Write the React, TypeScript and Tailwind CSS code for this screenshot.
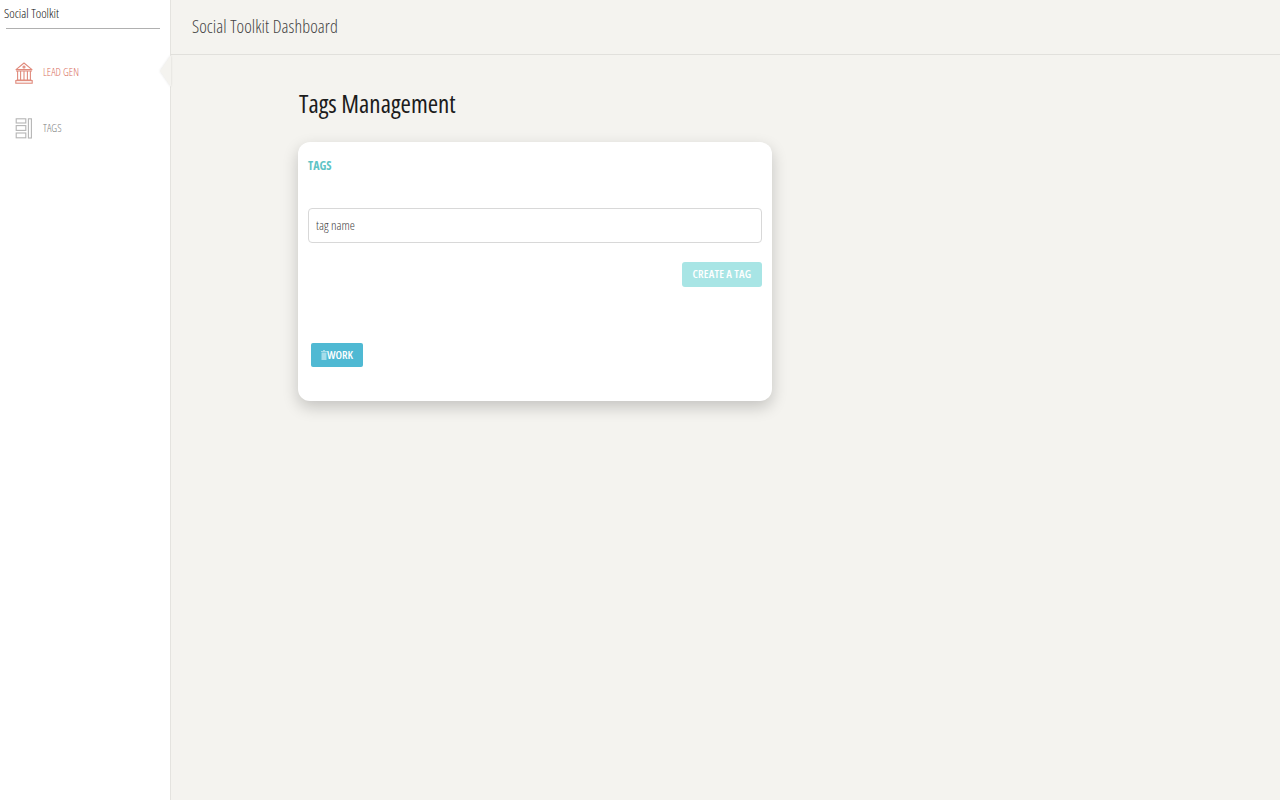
import React from 'react';

const font = { fontFamily: '"Open Sans", sans-serif' };

const BankIcon = () => (
  <svg width="18" height="22" viewBox="0 0 18 22" fill="none" stroke="#e08a7c" strokeWidth="1.1">
    <path d="M1 7.6 9 1l8 6.6z" strokeLinejoin="round" />
    <circle cx="9" cy="5" r="1" />
    <path d="M1 9h16M2.6 9v9M5.6 9v9M9 9v9M12.4 9v9M15.4 9v9M1.5 18h15" />
    <rect x="0.8" y="18.6" width="16.4" height="2.6" />
  </svg>
);

const TagsIcon = () => (
  <svg width="17" height="21" viewBox="0 0 17 21" fill="none" stroke="#b5b5b5" strokeWidth="1.1">
    <rect x="1.2" y="0.8" width="9.6" height="4.2" />
    <rect x="1.2" y="7.6" width="9.6" height="4.8" />
    <rect x="1.2" y="15" width="9.6" height="4.8" />
    <rect x="13.4" y="0.8" width="3" height="19.2" />
  </svg>
);

const TrashGlyph = () => (
  <svg width="6" height="10" viewBox="0 0 6 10" className="shrink-0" fill="#a5dce9">
    <path d="M2 0h2v1h2v1H0V1h2zM.5 2.6h5V10h-5z" />
  </svg>
);

export default function App() {
  return (
    <div className="flex min-h-[800px] bg-[#f4f3ef] font-stretch-[75%]" style={font}>
      <aside className="relative w-[171px] shrink-0 border-r border-[#e4e3df] bg-white">
        <div className="mr-[10px] ml-[6px] h-[29px] border-b border-[#b0b0b0] pt-[5px] text-[13px] leading-[17px] font-light text-[#111] -indent-[2px]">
          Social Toolkit
        </div>
        <nav className="mt-[33px] flex flex-col gap-[35px] pl-[15px]">
          <a className="flex h-[21px] items-center gap-[10px] text-[11px] font-light text-[#d96f5e]">
            <BankIcon />
            LEAD GEN
          </a>
          <a className="flex h-[21px] items-center gap-[11px] text-[11px] font-light text-[#808080]">
            <TagsIcon />
            TAGS
          </a>
        </nav>
        <span className="absolute top-[55px] right-[-1px] h-0 w-0 border-y-[16px] border-r-[11px] border-y-transparent border-r-[#f4f3ef] drop-shadow-[0_0_1px_rgba(0,0,0,0.12)]" />
      </aside>
      <div className="flex-1">
        <header className="flex h-[55px] items-center border-b border-[#e1e0dc] pb-[1px] pl-[21px] text-[18px] font-light tracking-[0.08px] text-[#444]">
          Social Toolkit Dashboard
        </header>
        <main className="pl-[128px] pt-[30px]">
          <h1 className="text-[25px] leading-[36px] font-normal text-[#1c1c1c]">Tags Management</h1>
          <section className="-ml-px mt-[21px] flex h-[259px] w-[474px] flex-col rounded-[12px] bg-white p-[10px] shadow-[0_6px_16px_rgba(0,0,0,0.2)]">
            <h2 className="mt-[6px] text-[12px] leading-[15px] font-bold text-[#5fc4c6]">TAGS</h2>
            <input
              placeholder="tag name"
              className="mt-[35px] h-[35px] w-full rounded-[4px] border border-[#d8d8d8] bg-white px-[7px] pb-[2px] text-[13px] font-light text-[#555] outline-none placeholder:text-[#444]"
            />
            <div className="mt-[19px] flex justify-end">
              <button className="h-[25px] w-[80px] rounded-[3px] bg-[#a8e5e5] pb-[1px] text-[11.5px] font-semibold tracking-[0.15px] text-white">
                CREATE A TAG
              </button>
            </div>
            <div className="mt-[56px] pl-[3px]">
              <button className="flex h-[24px] w-[52px] items-center justify-center rounded-[2px] bg-[#4fb9d3] text-[11.5px] font-semibold text-white">
                <TrashGlyph />
                WORK
              </button>
            </div>
          </section>
        </main>
      </div>
    </div>
  );
}
